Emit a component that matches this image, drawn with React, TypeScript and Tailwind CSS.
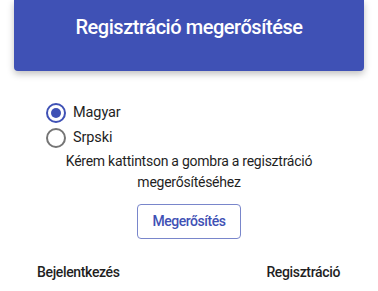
import React, { useState } from "react";

function Radio({ checked, label, onClick }: { checked: boolean; label: string; onClick: () => void }) {
  return (
    <div className="flex h-[25px] items-center cursor-pointer" onClick={onClick}>
      <span
        className={
          checked
            ? "flex h-[20px] w-[20px] items-center justify-center rounded-full border-2 border-[#3f51b5]"
            : "flex h-[20px] w-[20px] items-center justify-center rounded-full border-2 border-[#757575]"
        }
      >
        {checked && <span className="h-[10px] w-[10px] rounded-full bg-[#3f51b5]" />}
      </span>
      <span className="ml-[7px] text-[14.5px] tracking-[-0.1px] text-[#1f1f1f]">{label}</span>
    </div>
  );
}

export default function App() {
  const [lang, setLang] = useState("hu");
  return (
    <div
      className="h-[291px] w-[378px] overflow-hidden bg-white"
      style={{ fontFamily: "Roboto, 'Noto Sans', sans-serif" }}
    >
      <div className="mx-[14px] flex h-[71px] justify-center rounded-b-[4px] bg-[#3f51b5] pt-[13px] shadow-[0_3px_7px_rgba(0,0,0,0.25)]">
        <h1 className="text-[20px] font-medium leading-[28px] tracking-[-0.45px] text-white">Regisztráció megerősítése</h1>
      </div>
      <div className="ml-[46px] mt-[29px] flex flex-col">
        <Radio checked={lang === "hu"} label="Magyar" onClick={() => setLang("hu")} />
        <Radio checked={lang === "sr"} label="Srpski" onClick={() => setLang("sr")} />
      </div>
      <p className="mt-[1px] text-center text-[14px] leading-[21px] tracking-[-0.25px] text-[#1f1f1f]">
        Kérem kattintson a gombra a regisztráció
        <br />
        megerősítéséhez
      </p>
      <div className="mt-[11px] flex justify-center">
        <button className="h-[35px] w-[104px] rounded-[4px] border border-[#7986cb] text-[14px] font-medium tracking-[-0.45px] text-[#3f51b5]">
          Megerősítés
        </button>
      </div>
      <div className="mt-[23px] flex justify-between pl-[37px] pr-[38px] text-[14px] font-medium leading-[20px] tracking-[-0.35px] text-[#1f1f1f]">
        <span>Bejelentkezés</span>
        <span>Regisztráció</span>
      </div>
    </div>
  );
}
